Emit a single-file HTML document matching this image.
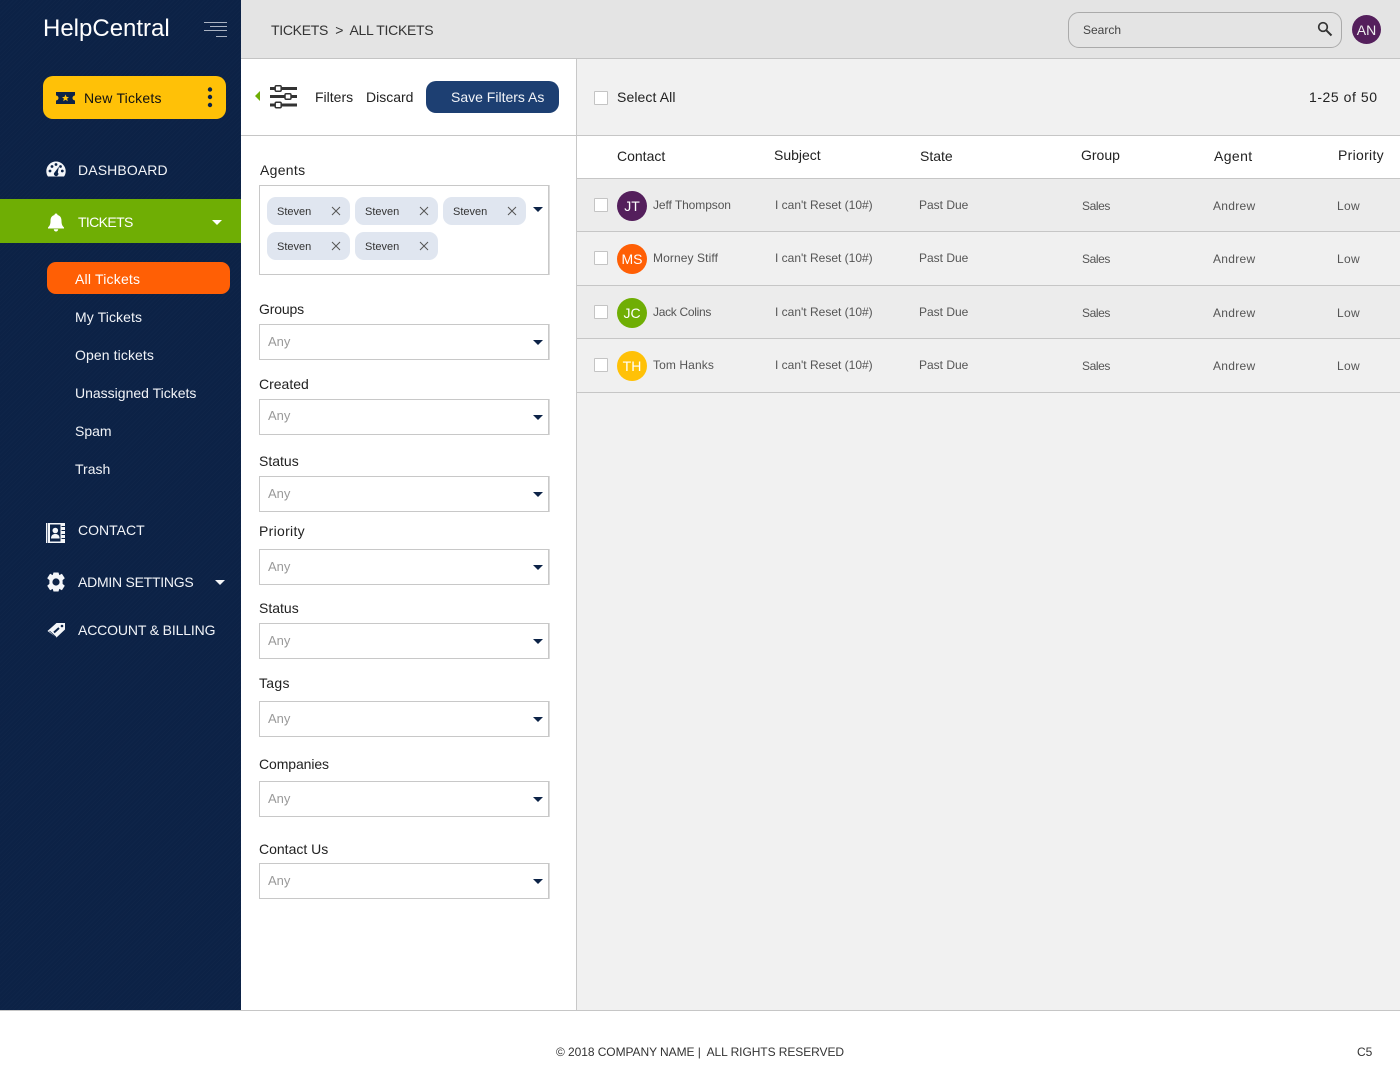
<!DOCTYPE html>
<html><head><meta charset="utf-8"><title>HelpCentral</title>
<style>
html,body{margin:0;padding:0;width:1400px;height:1085px;overflow:hidden;background:#fff}
body{position:relative;font-family:"Liberation Sans",sans-serif;color:#222}
.a{position:absolute}
.t{position:absolute;white-space:nowrap;height:20px;line-height:20px;font-size:14px}
.w{color:#f2f4f8}
.sel{position:absolute;left:259px;width:288px;height:34px;background:#fff;border:1px solid #c8c8c8;box-shadow:1px 0 0 #ddd}
.sel span{position:absolute;left:8px;top:7px;font-size:13px;line-height:20px;color:#9a9a9a}
.sel i{position:absolute;left:273px;top:15px;border-left:5px solid transparent;border-right:5px solid transparent;border-top:5px solid #0c2347}
.chip{position:absolute;width:83px;height:28px;background:#e0e6f0;border-radius:9px}
.chip span{position:absolute;left:10px;top:5px;font-size:11px;line-height:20px;color:#333}
.chip svg{position:absolute;left:64px;top:9px}
.l{font-size:14px;color:#222}
.row{position:absolute;left:577px;width:823px;border-bottom:1px solid #c6c6c6}
.cb{position:absolute;left:594px;width:12px;height:12px;background:#fff;border:1px solid #c4c4c4;border-radius:1px}
.av{position:absolute;left:617px;width:30px;height:30px;border-radius:50%;color:#fff;font-size:14px;line-height:31px;text-align:center}
.c{font-size:12px;color:#555}
.h{font-size:14px;color:#222}
.sl{letter-spacing:-.4px}
.an{letter-spacing:.3px}
.lo{letter-spacing:.3px}
</style></head><body>

<div class="a" style="left:0;top:0;width:241px;height:1010px;background-color:#0c2246;background-image:repeating-linear-gradient(135deg,rgba(255,255,255,.012) 0 1px,transparent 1px 3px)"></div>
<div class="t" style="left:43px;top:15px;height:28px;line-height:28px;font-size:24px;color:#fff;letter-spacing:0">HelpCentral</div>
<svg class="a" style="left:204px;top:21px" width="24" height="17" viewBox="0 0 24 17"><path d="M0 1.500H23M6 5.500H23M0 9.500H23M12 15.500H23" stroke="#aab3c2" stroke-width="1" fill="none"/></svg>

<div class="a" style="left:43px;top:76px;width:183px;height:43px;background:#ffc107;border-radius:10px"></div>
<svg class="a" style="left:56px;top:92px" width="19" height="12" viewBox="0 0 19 12"><path d="M0 0H19V3.500A2.500 2.500 0 0 0 19 8.500V12H0V8.500A2.500 2.500 0 0 0 0 3.500Z" fill="#0c2347"/><path d="M9.500 2.500L10.600 5H13L11.100 6.600L11.800 9.200L9.500 7.800L7.200 9.200L7.900 6.600L6 5H8.400Z" fill="#ffc107"/></svg>
<div class="t" style="left:84px;top:88px;color:#111;letter-spacing:.2px">New Tickets</div>
<svg class="a" style="left:206px;top:86px" width="8" height="23" viewBox="0 0 8 23"><circle cx="4" cy="3.500" r="2.200" fill="#0c2347"/><circle cx="4" cy="11" r="2.200" fill="#0c2347"/><circle cx="4" cy="19" r="2.200" fill="#0c2347"/></svg>

<svg class="a" style="left:46px;top:161px" width="20" height="16" viewBox="0 0 20 16"><path d="M10 0.500A9.700 9.700 0 0 0 0.300 10.200C0.300 12.300 1 14.300 2 15.500H18C19 14.300 19.700 12.300 19.700 10.200A9.700 9.700 0 0 0 10 0.500Z" fill="#f4f6f9"/><circle cx="4" cy="10" r="1.400" fill="#0c2347"/><circle cx="6" cy="5.500" r="1.400" fill="#0c2347"/><circle cx="10" cy="3.500" r="1.400" fill="#0c2347"/><circle cx="14.500" cy="5.500" r="1.400" fill="#0c2347"/><circle cx="16.300" cy="10" r="1.400" fill="#0c2347"/><path d="M13 5.500L11.800 11.500A2.200 2.200 0 1 1 8.500 11.500Z" fill="#0c2347"/></svg>
<div class="t w" style="left:78px;top:160px;letter-spacing:.12px">DASHBOARD</div>

<div class="a" style="left:0;top:199px;width:241px;height:44px;background:#6fae04"></div>
<svg class="a" style="left:47px;top:213px" width="18" height="19" viewBox="0 0 18 19"><path d="M9 0.500A1.500 1.500 0 0 1 10.500 2C13.500 2.800 14.500 5 14.500 8C14.500 11.500 15.500 13 17 14.500V15.500H1V14.500C2.500 13 3.500 11.500 3.500 8C3.500 5 4.500 2.800 7.500 2A1.500 1.500 0 0 1 9 0.500Z" fill="#fff"/><path d="M6.800 16.300H11.200A2.200 2.200 0 0 1 6.800 16.300Z" fill="#fff"/></svg>
<div class="t" style="left:78px;top:212px;color:#fff;letter-spacing:-.63px">TICKETS</div>
<div class="a" style="left:212px;top:220px;border-left:5px solid transparent;border-right:5px solid transparent;border-top:5px solid #fff"></div>

<div class="a" style="left:47px;top:262px;width:183px;height:32px;background:#ff5f05;border-radius:9px"></div>
<div class="t" style="left:75px;top:269px;color:#fff;letter-spacing:.2px">All Tickets</div>
<div class="t w" style="left:75px;top:307px;letter-spacing:.1px">My Tickets</div>
<div class="t w" style="left:75px;top:345px;letter-spacing:.1px">Open tickets</div>
<div class="t w" style="left:75px;top:383px">Unassigned Tickets</div>
<div class="t w" style="left:75px;top:421px">Spam</div>
<div class="t w" style="left:75px;top:459px">Trash</div>

<svg class="a" style="left:46px;top:523px" width="19" height="20" viewBox="0 0 19 20"><path d="M0 0H19V20H0Z" fill="#f4f6f9"/><path d="M4 1.500H14.500V18.500H4Z" fill="#0c2347"/><path d="M1.500 0V20" stroke="#0c2347" stroke-width=".6"/><path d="M15.500 3.500H19M15.500 7.500H19M15.500 11.500H19M15.500 15.500H19" stroke="#0c2347" stroke-width="1"/><circle cx="9.300" cy="7.500" r="2.800" fill="#f4f6f9"/><path d="M5 15.500C5 12.300 6.800 11 9.300 11S13.600 12.300 13.600 15.500Z" fill="#f4f6f9"/></svg>
<div class="t w" style="left:78px;top:520px">CONTACT</div>

<svg class="a" style="left:46px;top:572px" width="20" height="20" viewBox="0 0 20 20"><path fill-rule="evenodd" fill="#f4f6f9" d="M7.500 0.500H12.500L13.300 3.100L15.900 1.800L18.800 6.300L16.600 8.100V11.900L18.800 13.700L15.900 18.200L13.300 16.900L12.500 19.500H7.500L6.700 16.900L4.100 18.200L1.200 13.700L3.400 11.900V8.100L1.200 6.300L4.100 1.800L6.700 3.100ZM10 6.400A3.600 3.600 0 1 0 10 13.600A3.600 3.600 0 1 0 10 6.400Z"/></svg>
<div class="t w" style="left:78px;top:572px;letter-spacing:-.25px">ADMIN SETTINGS</div>
<div class="a" style="left:215px;top:580px;border-left:5px solid transparent;border-right:5px solid transparent;border-top:5px solid #f4f6f9"></div>

<svg class="a" style="left:47px;top:622px" width="19" height="16" viewBox="0 0 19 16"><path d="M0.500 9L9.500 1H18V7.500L9.500 15.500Z" fill="#f4f6f9"/><circle cx="15" cy="4" r="1.300" fill="#0c2347"/><path d="M7 10.500L12 6" stroke="#0c2347" stroke-width="2"/><path d="M2.500 9L9 15" stroke="#0c2347" stroke-width=".7"/></svg>
<div class="t w" style="left:78px;top:620px;letter-spacing:-.14px">ACCOUNT &amp; BILLING</div>

<div class="a" style="left:241px;top:0;width:1159px;height:58px;background:#e4e4e4;border-bottom:1px solid #c4c4c4"></div>
<div class="t" style="left:271px;top:20px;color:#333;letter-spacing:-.3px">TICKETS &nbsp;&gt;&nbsp; ALL TICKETS</div>
<div class="a" style="left:1068px;top:12px;width:272px;height:34px;border:1px solid #aaa;border-radius:11px"></div>
<div class="t" style="left:1083px;top:20px;font-size:12px;color:#444">Search</div>
<svg class="a" style="left:1317px;top:21px" width="16" height="16" viewBox="0 0 16 16"><circle cx="6" cy="6" r="4.300" fill="none" stroke="#333" stroke-width="1.700"/><path d="M9.300 9.300L14.500 14.500" stroke="#333" stroke-width="2"/></svg>
<div class="a" style="left:1352px;top:15px;width:29px;height:29px;border-radius:50%;background:#541f5c;color:#eee;font-size:14px;line-height:30px;text-align:center">AN</div>

<div class="a" style="left:241px;top:59px;width:335px;height:951px;background:#fff"></div>
<div class="a" style="left:576px;top:59px;width:1px;height:951px;background:#c8c8c8"></div>
<div class="a" style="left:577px;top:59px;width:823px;height:951px;background:#f1f1f1"></div>
<div class="a" style="left:241px;top:135px;width:1159px;height:1px;background:#c6c6c6"></div>

<div class="a" style="left:255px;top:91px;border-top:5px solid transparent;border-bottom:5px solid transparent;border-right:5px solid #6fae04"></div>
<svg class="a" style="left:270px;top:85px" width="28" height="24" viewBox="0 0 28 24"><path d="M0 3.500H27M0 11.500H27M0 20H27" stroke="#333" stroke-width="3"/><rect x="5.200" y="0.800" width="6" height="5.400" rx="1.200" fill="#fff" stroke="#333" stroke-width="1.500"/><rect x="15" y="8.800" width="6" height="5.400" rx="1.200" fill="#fff" stroke="#333" stroke-width="1.500"/><rect x="5.200" y="17.300" width="6" height="5.400" rx="1.200" fill="#fff" stroke="#333" stroke-width="1.500"/></svg>
<div class="t" style="left:315px;top:87px">Filters</div>
<div class="t" style="left:366px;top:87px">Discard</div>
<div class="a" style="left:426px;top:81px;width:133px;height:32px;background:#1d3f72;border-radius:10px"></div>
<div class="t" style="left:451px;top:87px;color:#f2f4f8">Save Filters As</div>

<div class="t l" style="left:260px;top:160px;letter-spacing:.3px">Agents</div>
<div class="a" style="left:259px;top:185px;width:288px;height:88px;background:#fff;border:1px solid #c8c8c8;box-shadow:1px 0 0 #ddd"></div>
<div class="chip" style="left:267px;top:197px"><span>Steven</span><svg width="10" height="10" viewBox="0 0 10 10"><path d="M1 1L9 9M9 1L1 9" stroke="#555" stroke-width="1"/></svg></div>
<div class="chip" style="left:355px;top:197px"><span>Steven</span><svg width="10" height="10" viewBox="0 0 10 10"><path d="M1 1L9 9M9 1L1 9" stroke="#555" stroke-width="1"/></svg></div>
<div class="chip" style="left:443px;top:197px"><span>Steven</span><svg width="10" height="10" viewBox="0 0 10 10"><path d="M1 1L9 9M9 1L1 9" stroke="#555" stroke-width="1"/></svg></div>
<div class="chip" style="left:267px;top:232px"><span>Steven</span><svg width="10" height="10" viewBox="0 0 10 10"><path d="M1 1L9 9M9 1L1 9" stroke="#555" stroke-width="1"/></svg></div>
<div class="chip" style="left:355px;top:232px"><span>Steven</span><svg width="10" height="10" viewBox="0 0 10 10"><path d="M1 1L9 9M9 1L1 9" stroke="#555" stroke-width="1"/></svg></div>
<div class="a" style="left:533px;top:207px;border-left:5px solid transparent;border-right:5px solid transparent;border-top:5px solid #0c2347"></div>

<div class="t l" style="left:259px;top:299px;letter-spacing:-.15px">Groups</div><div class="sel" style="top:324px"><span>Any</span><i></i></div>
<div class="t l" style="left:259px;top:374px">Created</div><div class="sel" style="top:399px"><span style="top:6px">Any</span><i></i></div>
<div class="t l" style="left:259px;top:451px">Status</div><div class="sel" style="top:476px"><span>Any</span><i></i></div>
<div class="t l" style="left:259px;top:521px;letter-spacing:.3px">Priority</div><div class="sel" style="top:549px"><span>Any</span><i></i></div>
<div class="t l" style="left:259px;top:598px">Status</div><div class="sel" style="top:623px"><span>Any</span><i></i></div>
<div class="t l" style="left:259px;top:673px;letter-spacing:.3px">Tags</div><div class="sel" style="top:701px"><span>Any</span><i></i></div>
<div class="t l" style="left:259px;top:754px;letter-spacing:-.1px">Companies</div><div class="sel" style="top:781px"><span>Any</span><i></i></div>
<div class="t l" style="left:259px;top:839px">Contact Us</div><div class="sel" style="top:863px"><span>Any</span><i></i></div>

<div class="cb" style="top:91px"></div>
<div class="t" style="left:617px;top:87px;letter-spacing:.1px">Select All</div>
<div class="t" style="left:1309px;top:87px;letter-spacing:.55px">1-25 of 50</div>

<div class="a" style="left:577px;top:136px;width:823px;height:42px;background:#fff;border-bottom:1px solid #c6c6c6"></div>
<div class="t h" style="left:617px;top:146px">Contact</div>
<div class="t h" style="left:774px;top:145px">Subject</div>
<div class="t h" style="left:920px;top:146px">State</div>
<div class="t h" style="left:1081px;top:145px">Group</div>
<div class="t h" style="left:1214px;top:146px;letter-spacing:.4px">Agent</div>
<div class="t h" style="left:1338px;top:145px;letter-spacing:.3px">Priority</div>

<div class="row" style="top:179px;height:52px;background:#ececec"></div>
<div class="row" style="top:232px;height:53px;background:#f0f0f0"></div>
<div class="row" style="top:286px;height:52px;background:#ececec"></div>
<div class="row" style="top:339px;height:53px;background:#f0f0f0"></div>

<div class="cb" style="top:198px"></div><div class="av" style="top:191px;background:#541f5c">JT</div>
<div class="t c" style="left:653px;top:195px;letter-spacing:-.08px">Jeff Thompson</div><div class="t c" style="left:775px;top:195px">I can't Reset (10#)</div><div class="t c" style="left:919px;top:195px">Past Due</div><div class="t c sl" style="left:1082px;top:196px">Sales</div><div class="t c an" style="left:1213px;top:196px">Andrew</div><div class="t c lo" style="left:1337px;top:196px">Low</div>

<div class="cb" style="top:251px"></div><div class="av" style="top:244px;background:#ff5f05">MS</div>
<div class="t c" style="left:653px;top:248px;letter-spacing:.1px">Morney Stiff</div><div class="t c" style="left:775px;top:248px">I can't Reset (10#)</div><div class="t c" style="left:919px;top:248px">Past Due</div><div class="t c sl" style="left:1082px;top:249px">Sales</div><div class="t c an" style="left:1213px;top:249px">Andrew</div><div class="t c lo" style="left:1337px;top:249px">Low</div>

<div class="cb" style="top:305px"></div><div class="av" style="top:298px;background:#6fae04">JC</div>
<div class="t c" style="left:653px;top:302px;letter-spacing:-.3px">Jack Colins</div><div class="t c" style="left:775px;top:302px">I can't Reset (10#)</div><div class="t c" style="left:919px;top:302px">Past Due</div><div class="t c sl" style="left:1082px;top:303px">Sales</div><div class="t c an" style="left:1213px;top:303px">Andrew</div><div class="t c lo" style="left:1337px;top:303px">Low</div>

<div class="cb" style="top:358px"></div><div class="av" style="top:351px;background:#ffc107">TH</div>
<div class="t c" style="left:653px;top:355px;letter-spacing:.1px">Tom Hanks</div><div class="t c" style="left:775px;top:355px">I can't Reset (10#)</div><div class="t c" style="left:919px;top:355px">Past Due</div><div class="t c sl" style="left:1082px;top:356px">Sales</div><div class="t c an" style="left:1213px;top:356px">Andrew</div><div class="t c lo" style="left:1337px;top:356px">Low</div>

<div class="a" style="left:0;top:1010px;width:1400px;height:1px;background:#c6c6c6"></div>
<div class="t" style="left:556px;top:1042px;font-size:12px;color:#333;letter-spacing:-.07px">© 2018 COMPANY NAME |&nbsp; ALL RIGHTS RESERVED</div>
<div class="t" style="left:1357px;top:1042px;font-size:12px;color:#333">C5</div>
</body></html>
